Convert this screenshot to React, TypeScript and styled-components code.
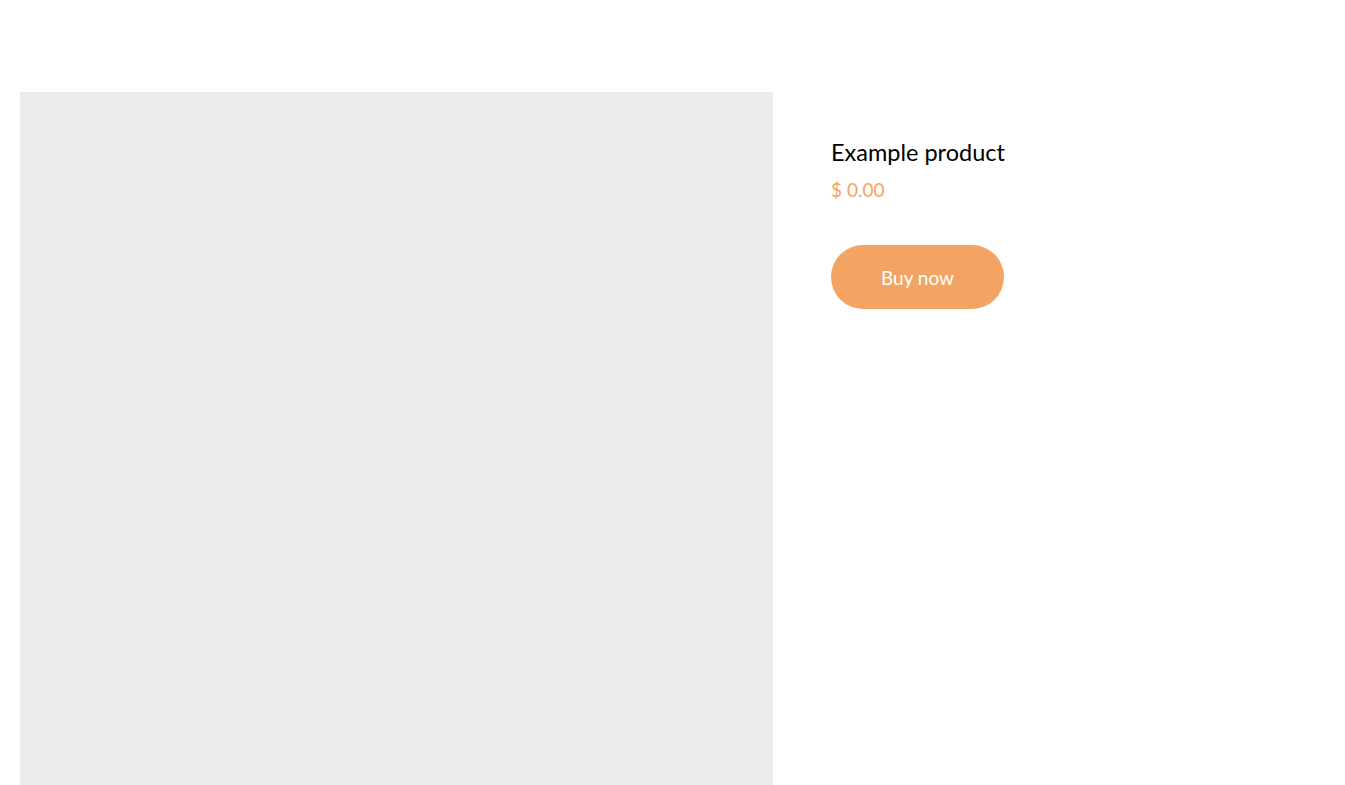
import React from "react";
import styled, { createGlobalStyle } from "styled-components";

const Global = createGlobalStyle`
  html, body { margin: 0; padding: 0; background: #fff; }
  body { font-family: "Lato", "Open Sans", sans-serif; }
`;

const Page = styled.main`
  display: flex;
  align-items: flex-start;
  padding: 92px 20px 0 20px;
`;

const Media = styled.div`
  flex: 0 0 753px;
  width: 753px;
  height: 753px;
  background: #edeceb;
`;

const Details = styled.section`
  display: flex;
  flex-direction: column;
  align-items: flex-start;
  padding: 45px 0 0 58px;
`;

const Title = styled.h1`
  margin: 0;
  font-size: 23.5px;
  line-height: 30px;
  font-weight: 400;
  color: #000;
`;

const Price = styled.div`
  margin-top: 11px;
  font-size: 19px;
  line-height: 24px;
  color: #f3a462;
`;

const BuyButton = styled.button`
  margin-top: 43px;
  width: 173px;
  height: 64px;
  border: none;
  border-radius: 32px;
  background: #f3a462;
  color: #fff;
  font-family: inherit;
  font-size: 19px;
  cursor: pointer;
`;

export default function App() {
  return (
    <>
      <Global />
      <Page>
        <Media />
        <Details>
          <Title>Example product</Title>
          <Price>$ 0.00</Price>
          <BuyButton>Buy now</BuyButton>
        </Details>
      </Page>
    </>
  );
}
